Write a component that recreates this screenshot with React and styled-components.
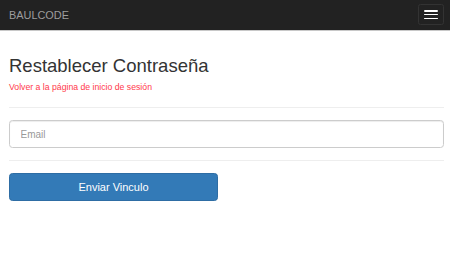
import React from "react";
import styled, { createGlobalStyle } from "styled-components";

const Global = createGlobalStyle`
  * { box-sizing: border-box; }
  html, body { margin: 0; padding: 0; background: #fff; }
  body { font-family: "Liberation Sans", Arial, sans-serif; color: #333; }
`;

const Navbar = styled.nav`
  height: 31px;
  background: #222;
  border-bottom: 1px solid #c8c8c8;
  display: flex;
  align-items: center;
  justify-content: space-between;
  padding: 0 6px 0 9px;
`;

const Brand = styled.a`
  font-size: 10.9px;
  color: #9d9d9d;
  text-decoration: none;
`;

const Toggle = styled.button`
  width: 26px;
  height: 21px;
  margin-top: -0.5px;
  background: #222;
  border: 1px solid #333;
  border-radius: 2.5px;
  display: flex;
  flex-direction: column;
  align-items: center;
  justify-content: center;
  gap: 2.4px;
  padding: 0;
`;

const Bar = styled.span`
  display: block;
  width: 14px;
  height: 1.3px;
  background: #fff;
  border-radius: 1px;
`;

const Container = styled.main`
  padding: 0 6px 0 9px;
`;

const Title = styled.h2`
  margin: 25.4px 0 0;
  font-size: 18.5px;
  font-weight: 400;
  line-height: 1.1;
  color: #333;
`;

const BackLink = styled.a`
  display: block;
  margin-top: 4.6px;
  font-size: 8.7px;
  line-height: 12.4px;
  color: #ff3a4c;
  text-decoration: none;
`;

const Rule = styled.hr`
  margin: ${(p) => p.$top}px 0 0;
  border: 0;
  border-top: 1px solid #eee;
  height: 0;
`;

const Input = styled.input`
  display: block;
  width: 100%;
  height: 28px;
  margin-top: 12px;
  padding: 0 10.5px;
  font-family: "Liberation Sans", Arial, sans-serif;
  font-size: 10px;
  color: #555;
  border: 1px solid #ccc;
  border-radius: 3.5px;
  box-shadow: inset 0 1px 1px rgba(0, 0, 0, 0.075);
  outline: none;
  &::placeholder { color: #999; }
`;

const Button = styled.button`
  display: block;
  width: 209px;
  height: 28px;
  margin-top: 12px;
  font-family: "Liberation Sans", Arial, sans-serif;
  font-size: 11px;
  color: #fff;
  background: #337ab7;
  border: 1px solid #2e6da4;
  border-radius: 3.5px;
  padding: 0;
`;

export default function App() {
  return (
    <>
      <Global />
      <Navbar>
        <Brand href="#">BAULCODE</Brand>
        <Toggle aria-label="menu">
          <Bar />
          <Bar />
          <Bar />
        </Toggle>
      </Navbar>
      <Container>
        <Title>Restablecer Contraseña</Title>
        <BackLink href="#">Volver a la página de inicio de sesión</BackLink>
        <Rule $top={13.3} />
        <Input placeholder="Email" />
        <Rule $top={12} />
        <Button>Enviar Vinculo</Button>
      </Container>
    </>
  );
}
